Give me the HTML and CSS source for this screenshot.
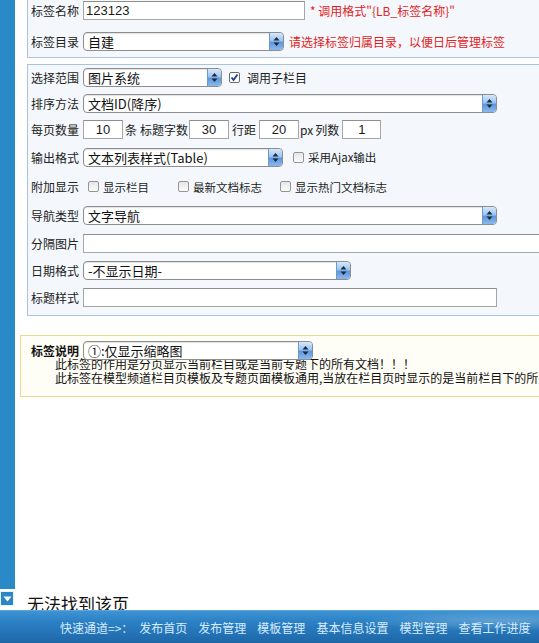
FILE: index.html
```html
<!DOCTYPE html>
<html lang="zh">
<head>
<meta charset="utf-8">
<title>标签</title>
<link rel="stylesheet" href="styles.css">
</head>
<body>
<div class="main">
  <div class="sidebar">
    <div class="sidebar-bar"></div>
    <div class="sidebar-btn">
      <svg width="9" height="6" viewBox="0 0 9 6"><path d="M0.5 0.5 L8.5 0.5 L4.5 5.5 Z" fill="#fff"/></svg>
    </div>
  </div>
  <div class="content">
    <div class="box box-top">
      <div class="row r1">
        <span class="label">标签名称</span>
        <span class="inp w222">123123</span>
        <span class="hint">* 调用格式"{LB_标签名称}"</span>
      </div>
      <div class="row r2">
        <span class="label">标签目录</span>
        <span class="sel w201"><span class="sel-text">自建</span><span class="sel-arrow"><svg width="7" height="11" viewBox="0 0 7 11"><path d="M3.5 1 L6.5 4.5 L0.5 4.5 Z M3.5 10 L6.5 6.5 L0.5 6.5 Z" fill="#1c2a3c"/></svg></span></span>
        <span class="hint hint2">请选择标签归属目录，以便日后管理标签</span>
      </div>
    </div>

    <div class="box box-main">
      <div class="row h25">
        <span class="label">选择范围</span>
        <span class="sel w139"><span class="sel-text">图片系统</span><span class="sel-arrow"><svg width="7" height="11" viewBox="0 0 7 11"><path d="M3.5 1 L6.5 4.5 L0.5 4.5 Z M3.5 10 L6.5 6.5 L0.5 6.5 Z" fill="#1c2a3c"/></svg></span></span>
        <span class="cb checked ml7"><svg width="9" height="9" viewBox="0 0 9 9"><path d="M1.5 4.5 L3.5 7 L7.5 1.5" fill="none" stroke="#1d3f8a" stroke-width="1.8"/></svg></span>
        <span class="txt ml7">调用子栏目</span>
      </div>
      <div class="row h26">
        <span class="label">排序方法</span>
        <span class="sel w414"><span class="sel-text">文档ID(降序)</span><span class="sel-arrow"><svg width="7" height="11" viewBox="0 0 7 11"><path d="M3.5 1 L6.5 4.5 L0.5 4.5 Z M3.5 10 L6.5 6.5 L0.5 6.5 Z" fill="#1c2a3c"/></svg></span></span>
      </div>
      <div class="row h26">
        <span class="label">每页数量</span>
        <span class="inp num">10</span>
        <span class="txt ml2">条</span>
        <span class="txt ml3">标题字数</span>
        <span class="inp num ml1">30</span>
        <span class="txt ml3">行距</span>
        <span class="inp num ml3">20</span>
        <span class="txt ml1">px</span>
        <span class="txt ml2">列数</span>
        <span class="inp num n39 ml3">1</span>
      </div>
      <div class="row h30">
        <span class="label">输出格式</span>
        <span class="sel w200"><span class="sel-text">文本列表样式(Table)</span><span class="sel-arrow"><svg width="7" height="11" viewBox="0 0 7 11"><path d="M3.5 1 L6.5 4.5 L0.5 4.5 Z M3.5 10 L6.5 6.5 L0.5 6.5 Z" fill="#1c2a3c"/></svg></span></span>
        <span class="cb ml10"></span>
        <span class="txt ml4 small">采用Ajax输出</span>
      </div>
      <div class="row h29">
        <span class="label">附加显示</span>
        <span class="cb ml5"></span>
        <span class="txt ml4 small">显示栏目</span>
        <span class="cb ml29"></span>
        <span class="txt ml4 small">最新文档标志</span>
        <span class="cb ml18"></span>
        <span class="txt ml4 small">显示热门文档标志</span>
      </div>
      <div class="row h28">
        <span class="label">导航类型</span>
        <span class="sel w414"><span class="sel-text">文字导航</span><span class="sel-arrow"><svg width="7" height="11" viewBox="0 0 7 11"><path d="M3.5 1 L6.5 4.5 L0.5 4.5 Z M3.5 10 L6.5 6.5 L0.5 6.5 Z" fill="#1c2a3c"/></svg></span></span>
      </div>
      <div class="row h29">
        <span class="label">分隔图片</span>
        <span class="inp w500"></span>
      </div>
      <div class="row h24">
        <span class="label">日期格式</span>
        <span class="sel w268"><span class="sel-text">-不显示日期-</span><span class="sel-arrow"><svg width="7" height="11" viewBox="0 0 7 11"><path d="M3.5 1 L6.5 4.5 L0.5 4.5 Z M3.5 10 L6.5 6.5 L0.5 6.5 Z" fill="#1c2a3c"/></svg></span></span>
      </div>
      <div class="row h30">
        <span class="label">标题样式</span>
        <span class="inp w414"></span>
      </div>
    </div>

    <div class="box box-note">
      <div class="note-head">
        <span class="label bold">标签说明</span>
        <span class="sel w230 raised"><span class="sel-text">①:仅显示缩略图</span><span class="sel-arrow"><svg width="7" height="11" viewBox="0 0 7 11"><path d="M3.5 1 L6.5 4.5 L0.5 4.5 Z M3.5 10 L6.5 6.5 L0.5 6.5 Z" fill="#1c2a3c"/></svg></span></span>
      </div>
      <div class="note-line">此标签的作用是分页显示当前栏目或是当前专题下的所有文档！！！</div>
      <div class="note-line">此标签在模型频道栏目页模板及专题页面模板通用,当放在栏目页时显示的是当前栏目下的所有文档,当放在专题页面时显示的是当前专题下的所有文档</div>
    </div>

    <div class="spacer"></div>
    <div class="notfound">无法找到该页</div>
  </div>
</div>
<div class="footer">
  <span class="f-lead">快速通道=>：</span>
  <span class="f-item">发布首页</span>
  <span class="f-item">发布管理</span>
  <span class="f-item">模板管理</span>
  <span class="f-item">基本信息设置</span>
  <span class="f-item">模型管理</span>
  <span class="f-item">查看工作进度</span>
</div>
</body>
</html>
```
FILE: styles.css
```css
html, body {
  margin: 0;
  padding: 0;
}
body {
  width: 539px;
  height: 643px;
  overflow: hidden;
  display: flex;
  flex-direction: column;
  font-family: "Noto Sans CJK SC", "Microsoft YaHei", sans-serif;
  font-size: 12px;
  color: #1a1a1a;
  background: #fff;
}
.main {
  flex: 1;
  display: flex;
  min-height: 0;
}
.sidebar {
  width: 15px;
  flex: none;
  display: flex;
  flex-direction: column;
}
.sidebar-bar {
  flex: 1;
  background: #2a8ac8;
}
.sidebar-btn {
  height: 13px;
  margin: 2px 1px 4px 0;
  background: #2b86c6;
  border: 1px solid #e8f2fb;
  display: flex;
  align-items: center;
  justify-content: center;
}
.content {
  flex: 1;
  min-width: 0;
  overflow: hidden;
  display: flex;
  flex-direction: column;
}
.box {
  flex: none;
  width: 620px;
  box-sizing: border-box;
}
.box-top {
  margin-left: 12px;
  border: 1px solid #a9c4dc;
  border-top: 0;
  background: #f4f8fc;
  padding: 0 0 6px 3px;
}
.box-main {
  margin-left: 12px;
  margin-top: 6px;
  border: 1px solid #a9c4dc;
  background: #f4f8fc;
  padding: 0 0 3px 3px;
}
.row {
  display: flex;
  align-items: center;
  white-space: nowrap;
}
.r1 { height: 20px; }
.r2 { height: 20px; margin-top: 11px; }
.h24 { height: 24px; }
.h25 { height: 25px; }
.h26 { height: 26px; }
.h28 { height: 28px; }
.h29 { height: 29px; }
.h30 { height: 30px; }
.label {
  width: 52px;
  flex: none;
  font-size: 12px;
  color: #222;
}
.bold {
  font-weight: bold;
}
.txt {
  font-size: 12px;
  color: #222;
}
.small {
  font-size: 11.5px;
}
.hint {
  margin-left: 5px;
  color: #e3231d;
  font-family: "Noto Sans CJK SC", sans-serif;
  font-size: 12px;
}
.hint2 { margin-left: 5px; }
.inp {
  box-sizing: border-box;
  height: 19px;
  border: 1px solid #a6a6a6;
  border-top-color: #8e8e8e;
  background: #fff;
  font-family: "Liberation Sans", "Noto Sans CJK SC", sans-serif;
  font-size: 13px;
  line-height: 17px;
  padding: 0 2px;
  flex: none;
}
.num {
  width: 40px;
  text-align: center;
}
.n39 { width: 39px; }
.w222 { width: 222px; }
.w414 { width: 414px; }
.w500 { width: 500px; }
.sel {
  box-sizing: border-box;
  height: 19px;
  border: 1px solid #8d8d8d;
  border-radius: 4px;
  background: #fff;
  display: flex;
  align-items: stretch;
  flex: none;
  overflow: hidden;
  box-shadow: inset 0 1px 1px rgba(0,0,0,0.12);
}
.raised {
  position: relative;
  z-index: 1;
}
.sel-text {
  flex: 1;
  padding-left: 4px;
  font-size: 13px;
  line-height: 17px;
  color: #111;
  overflow: hidden;
}
.sel-arrow {
  width: 13px;
  flex: none;
  border-radius: 0 3px 3px 0;
  background: linear-gradient(180deg, #d6e8fb 0%, #9cc3ef 45%, #5e97dc 55%, #8ab8ec 100%);
  display: flex;
  align-items: center;
  justify-content: center;
  border-left: 1px solid #6f98c8;
}
.w139 { width: 139px; }
.w200 { width: 200px; }
.w201 { width: 201px; }
.w230 { width: 230px; }
.w268 { width: 268px; }
.cb {
  box-sizing: border-box;
  width: 11px;
  height: 11px;
  flex: none;
  border: 1px solid #959595;
  border-radius: 2px;
  background: linear-gradient(180deg, #e6e6e6, #fbfbfb);
  display: flex;
  align-items: center;
  justify-content: center;
}
.checked {
  background: #fff;
  border-color: #6c6c6c;
}
.ml1 { margin-left: 1px; }
.ml2 { margin-left: 2px; }
.ml3 { margin-left: 3px; }
.ml4 { margin-left: 4px; }
.ml5 { margin-left: 5px; }
.ml7 { margin-left: 7px; }
.ml10 { margin-left: 10px; }
.ml18 { margin-left: 18px; }
.ml29 { margin-left: 29px; }
.box-note {
  margin-left: 5px;
  margin-top: 19px;
  border: 1px solid #ead892;
  background: #fffef6;
  padding: 5px 0 11px 10px;
}
.note-head {
  display: flex;
  align-items: flex-start;
  height: 16px;
}
.note-head .label {
  width: 52px;
  line-height: 19px;
  color: #111;
}
.note-line {
  padding-left: 24px;
  font-family: "Noto Sans CJK SC", sans-serif;
  font-size: 12px;
  line-height: 14px;
  white-space: nowrap;
  color: #111;
}
.spacer {
  flex: 1;
}
.notfound {
  flex: none;
  margin-left: 12px;
  height: 19px;
  overflow: hidden;
  font-size: 17px;
  line-height: 26px;
  color: #111;
}
.footer {
  flex: none;
  height: 32px;
  display: flex;
  align-items: center;
  padding-left: 60px;
  gap: 10px;
  white-space: nowrap;
  color: #d6ecff;
  font-size: 12px;
  background:
    radial-gradient(ellipse 140px 10px at 500px 10px, rgba(255,255,255,0.25), rgba(255,255,255,0)),
    linear-gradient(180deg, #3d93d3 0%, #2b80c3 35%, #2473b6 70%, #1d66a6 100%);
  border-top: 1px solid #5aa6de;
}
.f-lead {
  margin-right: -4px;
}
.f-item + .f-item {
  margin-left: 1px;
}
```
